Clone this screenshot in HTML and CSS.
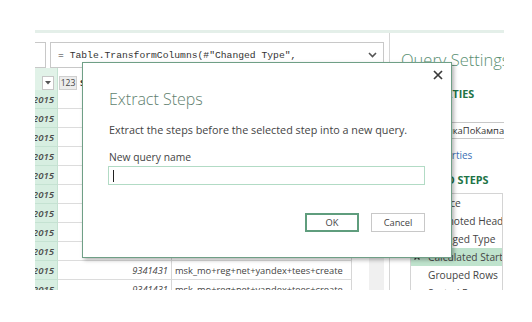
FILE: index.html
```html
<!DOCTYPE html>
<html lang="en">
<head>
  <meta charset="UTF-8">
  <meta name="viewport" content="width=device-width, initial-scale=1.0">
  <title>Extract Steps</title>
  <link rel="stylesheet" href="styles.css">
</head>
<body>
  <div class="app">
    <div class="ribbon"></div>
    <div class="body">
      <div class="main">
        <div class="formula-bar">
          <div class="name-box"></div>
          <div class="formula">
            <span class="formula-text">= Table.TransformColumns(#"Changed Type",</span>
            <svg class="chevron" width="9" height="6" viewBox="0 0 9 6"><path d="M1 1 L4.5 4.5 L8 1" fill="none" stroke="#555" stroke-width="1.6"/></svg>
          </div>
        </div>

        <div class="row head">
          <div class="c-date"><span class="filter"><svg width="6" height="4" viewBox="0 0 6 4"><path d="M0 0 H6 L3 3.5 Z" fill="#555"/></svg></span></div>
          <div class="c-num"><span class="type">123</span><span class="col-name">Sessions</span></div>
          <div class="c-text"></div>
          <div class="c-pad"></div>
          <div class="c-scroll"></div>
          <div class="c-gap"></div>
        </div>
        <div class="row"><div class="c-date">2015</div><div class="c-num"></div><div class="c-text"></div><div class="c-pad"></div><div class="c-scroll"></div><div class="c-gap"></div></div>
        <div class="row"><div class="c-date">2015</div><div class="c-num"></div><div class="c-text"></div><div class="c-pad"></div><div class="c-scroll"></div><div class="c-gap"></div></div>
        <div class="row"><div class="c-date">2015</div><div class="c-num"></div><div class="c-text"></div><div class="c-pad"></div><div class="c-scroll"></div><div class="c-gap"></div></div>
        <div class="row"><div class="c-date">2015</div><div class="c-num"></div><div class="c-text"></div><div class="c-pad"></div><div class="c-scroll"></div><div class="c-gap"></div></div>
        <div class="row"><div class="c-date">2015</div><div class="c-num"></div><div class="c-text"></div><div class="c-pad"></div><div class="c-scroll"></div><div class="c-gap"></div></div>
        <div class="row"><div class="c-date">2015</div><div class="c-num"></div><div class="c-text"></div><div class="c-pad"></div><div class="c-scroll"></div><div class="c-gap"></div></div>
        <div class="row"><div class="c-date">2015</div><div class="c-num"></div><div class="c-text"></div><div class="c-pad"></div><div class="c-scroll"></div><div class="c-gap"></div></div>
        <div class="row"><div class="c-date">2015</div><div class="c-num"></div><div class="c-text"></div><div class="c-pad"></div><div class="c-scroll"></div><div class="c-gap"></div></div>
        <div class="row"><div class="c-date">2015</div><div class="c-num"></div><div class="c-text"></div><div class="c-pad"></div><div class="c-scroll"></div><div class="c-gap"></div></div>
        <div class="row"><div class="c-date">2015</div><div class="c-num">9341431</div><div class="c-text">msk_mo+reg+net+yandex+tees+create</div><div class="c-pad"></div><div class="c-scroll"></div><div class="c-gap"></div></div>
        <div class="row"><div class="c-date">2015</div><div class="c-num">9341431</div><div class="c-text">msk_mo+reg+net+yandex+tees+create</div><div class="c-pad"></div><div class="c-scroll"></div><div class="c-gap"></div></div>
      </div>

      <aside class="settings">
        <div class="settings-title">Query Settings</div>
        <div class="section-head">PROPERTIES</div>
        <div class="field-label">Name</div>
        <div class="name-input">СтатистикаПоКампаниям</div>
        <div class="link">All Properties</div>
        <div class="section-head steps-head">APPLIED STEPS</div>
        <ul class="steps">
          <li>Source</li>
          <li>Promoted Headers</li>
          <li>Changed Type</li>
          <li class="selected"><svg class="del" width="6" height="6" viewBox="0 0 6 6"><path d="M0.5 0.5 L5.5 5.5 M5.5 0.5 L0.5 5.5" stroke="#333" stroke-width="1.4"/></svg>Calculated Start</li>
          <li>Grouped Rows</li>
          <li>Sorted Rows</li>
        </ul>
      </aside>
    </div>

    <div class="dialog">
      <svg class="close" width="10" height="10" viewBox="0 0 10 10"><path d="M1 1 L9 9 M9 1 L1 9" stroke="#3a3a3a" stroke-width="1.7"/></svg>
      <div class="dialog-title">Extract Steps</div>
      <p class="dialog-text">Extract the steps before the selected step into a new query.</p>
      <div class="dialog-label">New query name</div>
      <div class="text-input"><span class="caret"></span></div>
      <div class="buttons">
        <button class="btn primary">OK</button>
        <button class="btn">Cancel</button>
      </div>
    </div>
  </div>
</body>
</html>
```

FILE: styles.css
```css
* {
  box-sizing: border-box;
}

body {
  margin: 0;
  background-color: #fff;
  font-family: "Open Sans", "Segoe UI", sans-serif;
  color: #444;
}

.app {
  position: relative;
  margin: 30px 0 0 35px;
  width: 469px;
  height: 260px;
  overflow: hidden;
}

.ribbon {
  height: 3px;
  background-color: #e4efe9;
}

.body {
  display: flex;
  height: 257px;
}

.main {
  width: 354px;
  flex: none;
}

/* formula bar */
.formula-bar {
  display: flex;
  gap: 4px;
  padding-top: 9px;
  height: 35px;
}

.name-box {
  width: 31px;
  margin-left: -20px;
  border: 1px solid #c8c8c8;
}

.formula {
  width: 334px;
  display: flex;
  align-items: center;
  justify-content: space-between;
  padding: 0 6px 0 7px;
  border: 1px solid #c8c8c8;
}

.formula-text {
  font-family: "Liberation Mono", monospace;
  font-size: 9.7px;
  color: #333;
  white-space: nowrap;
}

/* grid */
.row {
  display: grid;
  grid-template-columns: 23px 114px 180px 17px 15px 5px;
  height: 19px;
  font-size: 9.3px;
}

.row > div {
  display: flex;
  align-items: center;
  overflow: hidden;
  white-space: nowrap;
}

.row .c-date,
.row .c-num,
.row .c-text {
  border-bottom: 1px solid #dcdcdc;
  border-right: 1px solid #d6d6d6;
}

.c-date {
  justify-content: flex-end;
  padding-right: 3px;
  background-color: #d7eee1;
  font-style: italic;
  font-weight: 600;
  font-size: 9.6px;
  color: #4a4a4a;
}

.row .c-date {
  border-bottom-color: #c5e2d2;
  border-right-color: #c5e2d2;
}

.c-num {
  justify-content: flex-end;
  padding-right: 3px;
  font-style: italic;
}

.c-text {
  padding-left: 3px;
}

.c-scroll {
  background-color: #f0f0f0;
}

.row.head {
  height: 22px;
}

.row.head > div {
  align-items: flex-end;
  border-bottom: none;
}

.head .c-date {
  background-color: #e1f2e8;
}

.head .c-num {
  justify-content: flex-start;
  padding-left: 1px;
  gap: 3px;
  font-style: normal;
}

.filter {
  width: 12px;
  height: 14px;
  display: flex;
  align-items: center;
  justify-content: center;
  background-color: #fff;
  border: 1px solid #c6c6c6;
}

.type {
  width: 18px;
  height: 14px;
  display: flex;
  align-items: center;
  justify-content: center;
  background-color: #ececec;
  border: 1px solid #cfcfcf;
  font-size: 8.6px;
  color: #444;
}

.col-name {
  font-weight: 700;
  color: #333;
  line-height: 14px;
}

/* query settings pane */
.settings {
  flex: 1;
  min-width: 0;
  padding: 15px 0 0 11px;
  border-left: 1px solid #d6d6d6;
  white-space: nowrap;
  overflow: hidden;
}

.settings-title {
  font-size: 16.5px;
  font-weight: 300;
  line-height: 24px;
  color: #5a8f72;
}

.section-head {
  margin: 15px 0 0 9px;
  font-size: 10.8px;
  font-weight: 700;
  line-height: 14px;
  color: #217346;
}

.field-label {
  margin: 2px 0 0 9px;
  font-size: 10px;
  line-height: 14px;
}

.name-input {
  margin: 5px 0 0 9px;
  width: 160px;
  height: 17px;
  padding-left: 1px;
  border: 1px solid #c8c8c8;
  font-size: 9.4px;
  line-height: 15px;
  color: #333;
}

.link {
  margin: 9px 0 0 9px;
  font-size: 10px;
  line-height: 14px;
  color: #3c6fb4;
}

.steps-head {
  margin-top: 11px;
}

.steps {
  list-style: none;
  margin: 6px 0 0 9px;
  padding: 0;
  width: 93px;
  border: 1px solid #d4d4d4;
  border-bottom: none;
}

.steps li {
  position: relative;
  height: 18px;
  padding-left: 17px;
  font-size: 10.2px;
  line-height: 18px;
  color: #444;
  overflow: hidden;
}

.steps li.selected {
  background-color: #bfe3cd;
}

.del {
  position: absolute;
  left: 3px;
  top: 6px;
}

/* dialog */
.dialog {
  position: absolute;
  left: 47px;
  top: 32px;
  width: 370px;
  height: 196px;
  padding: 26px 26px 0;
  background-color: #fff;
  border: 1px solid #6f9f86;
  box-shadow: 2px 2px 4px rgba(0, 0, 0, 0.3);
}

.close {
  position: absolute;
  top: 7px;
  right: 8px;
}

.dialog-title {
  font-size: 16px;
  font-weight: 300;
  line-height: 20px;
  color: #5f7f6f;
}

.dialog-text {
  margin: 14px 0 0;
  font-size: 10.8px;
  line-height: 14px;
  color: #444;
}

.dialog-label {
  margin-top: 13px;
  font-size: 10.3px;
  line-height: 14px;
  color: #444;
}

.text-input {
  margin: 2px 0 0 -1px;
  width: 317px;
  height: 19px;
  display: flex;
  align-items: center;
  padding-left: 4px;
  border: 1px solid #b2dbc5;
}

.caret {
  width: 1px;
  height: 12px;
  background-color: #222;
}

.buttons {
  display: flex;
  justify-content: flex-end;
  gap: 12px;
  margin-top: 28px;
}

.btn {
  width: 54px;
  height: 19px;
  padding: 0;
  font-family: "Open Sans", "Segoe UI", sans-serif;
  font-size: 9.3px;
  color: #444;
  background-color: #fff;
  border: 1px solid #c8c8c8;
}

.btn.primary {
  border: 2px solid #5f9d7d;
}
```
